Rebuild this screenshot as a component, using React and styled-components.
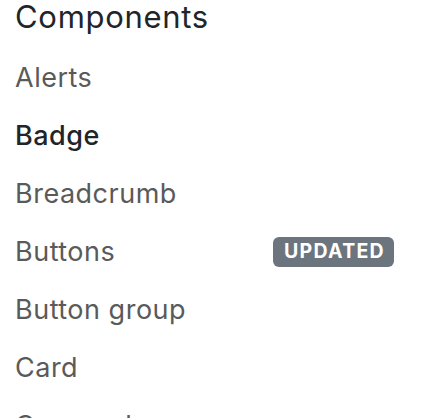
import React from "react";
import styled, { createGlobalStyle } from "styled-components";

const Global = createGlobalStyle`
  html, body { margin: 0; padding: 0; background: #fff; }
  body { font-family: Inter, "Noto Sans", sans-serif; -webkit-font-smoothing: antialiased; }
`;

const Nav = styled.nav`
  width: 438px;
  height: 418px;
  overflow: hidden;
  box-sizing: border-box;
  padding: 0 44px 0 15px;
`;

const Heading = styled.h5`
  margin: 0 0 16px;
  padding-top: 1px;
  font-size: 31px;
  line-height: 32px;
  font-weight: 400;
  letter-spacing: 0.7px;
  color: #212529;
`;

const List = styled.ul`
  list-style: none;
  margin: 0;
  padding: 0;
`;

const Item = styled.li`
  display: flex;
  align-items: center;
  height: 58px;
  font-size: 27px;
  line-height: 58px;
  letter-spacing: 0.5px;
  color: ${(p) => (p.$active ? "#212529" : "#5a5a5a")};
  font-weight: ${(p) => (p.$active ? 500 : 400)};
`;

const Badge = styled.span`
  margin-left: auto;
  display: inline-flex;
  align-items: center;
  height: 30px;
  padding: 0 9px 0 11px;
  border-radius: 6px;
  background: #6c757d;
  color: #fff;
  font-size: 19.5px;
  font-weight: 700;
  letter-spacing: 1.3px;
  line-height: 1;
`;

const items = [
  { label: "Alerts" },
  { label: "Badge", active: true },
  { label: "Breadcrumb" },
  { label: "Buttons", badge: "UPDATED" },
  { label: "Button group" },
  { label: "Card" },
  { label: "Carousel" },
];

export default function App() {
  return (
    <>
      <Global />
      <Nav>
        <Heading>Components</Heading>
        <List>
          {items.map((it) => (
            <Item key={it.label} $active={it.active}>
              {it.label}
              {it.badge && <Badge>{it.badge}</Badge>}
            </Item>
          ))}
        </List>
      </Nav>
    </>
  );
}
